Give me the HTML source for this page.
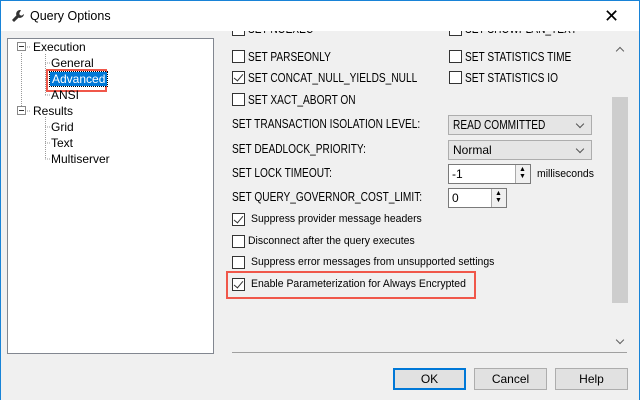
<!DOCTYPE html>
<html><head><style>
*{margin:0;padding:0;box-sizing:border-box}
body{width:640px;height:400px;background:#f0f0f0;font-family:"Liberation Sans",sans-serif;font-size:12px;color:#000;position:relative;overflow:hidden}
.a{position:absolute;white-space:nowrap}
.cb{position:absolute;width:13px;height:13px;border:1px solid #333;background:#fff}
.ck::after{content:"";position:absolute;left:3px;top:0px;width:4px;height:8px;border:solid #333;border-width:0 1.3px 1.3px 0;transform:rotate(40deg)}
.t{position:absolute;white-space:nowrap;line-height:14px}
.u{font-size:13px;transform:scaleX(0.78);transform-origin:0 0}
.l{font-size:11px;transform:scaleX(0.95);transform-origin:0 0}
.combo{position:absolute;background:#e5e5e5;border:1px solid #adadad;height:20px;padding:2px 4px;line-height:14px}
.combo::after{content:"";position:absolute;right:8px;top:5px;width:5px;height:5px;border:solid #555;border-width:0 1px 1px 0;transform:rotate(45deg)}
.spin{position:absolute;background:#fff;border:1px solid #7a7a7a;height:20px;padding:2px 3px;line-height:14px}
.sb{position:absolute;right:0;top:0;width:15px;height:18px;border-left:1px solid #aaa;background:#f0f0f0}
.btn{position:absolute;top:368px;height:22px;background:#e1e1e1;border:1px solid #adadad;text-align:center;line-height:20px}
</style></head><body>
<div class="a" style="left:0;top:0;width:640px;height:31px;background:#fff;border-top:1px solid #1883d7"></div>
<div class="a" style="left:0;top:0;width:1px;height:400px;background:#1883d7"></div>
<div class="a" style="left:639px;top:0;width:1px;height:400px;background:#1883d7"></div>
<svg class="a" style="left:11px;top:9px" width="14" height="14" viewBox="0 0 14 14"><path d="M9 1a4 4 0 0 0-3.6 5.4L1 11l2 2 4.6-4.4A4 4 0 0 0 13 5l-2.2 1.6-2-.5-.5-2L10 1.2z" fill="#333"/></svg>
<div class="t" style="left:30px;top:9px;font-size:12.5px">Query Options</div>
<div class="a" style="left:604px;top:7px;font-size:18px;line-height:18px">✕</div>

<div class="a" style="left:7px;top:38px;width:207px;height:316px;background:#fff;border:1px solid #828790"></div>
<svg class="a" style="left:7px;top:38px" width="120" height="140">
<g stroke="#999" stroke-dasharray="1 1" fill="none">
<path d="M14.5 15v58M18 9h6M18 73h6M38.5 16v41M38 25h6M38 41h6M38 57h6M38.5 79v42M38 89h6M38 105h6M38 121h6"/>
</g>
<rect x="10.5" y="4.5" width="8" height="8" fill="#fff" stroke="#888"/><path d="M12 8.5h5" stroke="#333"/>
<rect x="10.5" y="68.5" width="8" height="8" fill="#fff" stroke="#888"/><path d="M12 72.5h5" stroke="#333"/>
</svg>
<div class="t" style="left:33px;top:40px">Execution</div>
<div class="t" style="left:51px;top:56px">General</div>
<div class="a" style="left:46px;top:69px;width:61px;height:23px;border:2px solid #f0574a"></div>
<div class="t" style="left:50px;top:72px;background:#0078d7;color:#fff;padding:0 2px;outline:1px dotted #000">Advanced</div>
<div class="t" style="left:51px;top:88px">ANSI</div>
<div class="t" style="left:33px;top:104px">Results</div>
<div class="t" style="left:51px;top:120px">Grid</div>
<div class="t" style="left:51px;top:136px">Text</div>
<div class="t" style="left:51px;top:152px">Multiserver</div>

<div class="a" style="left:222px;top:31px;width:390px;height:320px;overflow:hidden">
<div class="cb" style="left:10px;top:-8px"></div><div class="t u" style="left:26px;top:-9px">SET NOEXEC</div>
<div class="cb" style="left:227px;top:-8px"></div><div class="t u" style="left:243px;top:-9px">SET SHOWPLAN_TEXT</div>
</div>
<div class="cb" style="left:232px;top:50px"></div><div class="t u" style="left:248px;top:50px">SET PARSEONLY</div>
<div class="cb" style="left:449px;top:50px"></div><div class="t u" style="left:465px;top:50px">SET STATISTICS TIME</div>
<div class="cb ck" style="left:232px;top:71px"></div><div class="t u" style="left:248px;top:71px">SET CONCAT_NULL_YIELDS_NULL</div>
<div class="cb" style="left:449px;top:71px"></div><div class="t u" style="left:465px;top:71px">SET STATISTICS IO</div>
<div class="cb" style="left:232px;top:93px"></div><div class="t u" style="left:248px;top:93px">SET XACT_ABORT ON</div>
<div class="t u" style="left:232px;top:117px">SET TRANSACTION ISOLATION LEVEL:</div>
<div class="combo" style="left:448px;top:115px;width:144px"><span class="u" style="display:inline-block">READ COMMITTED</span></div>
<div class="t u" style="left:232px;top:142px">SET DEADLOCK_PRIORITY:</div>
<div class="combo" style="left:448px;top:140px;width:144px">Normal</div>
<div class="t u" style="left:232px;top:166px">SET LOCK TIMEOUT:</div>
<div class="spin" style="left:448px;top:164px;width:83px">-1<div class="sb"><span style="position:absolute;left:3px;top:1px;font-size:7px;line-height:7px">▲<br>▼</span></div></div>
<div class="t l" style="left:537px;top:167px">milliseconds</div>
<div class="t u" style="left:232px;top:190px">SET QUERY_GOVERNOR_COST_LIMIT:</div>
<div class="spin" style="left:448px;top:188px;width:59px">0<div class="sb"><span style="position:absolute;left:3px;top:1px;font-size:7px;line-height:7px">▲<br>▼</span></div></div>
<div class="cb ck" style="left:232px;top:213px"></div><div class="t l" style="left:251px;top:212px">Suppress provider message headers</div>
<div class="cb" style="left:232px;top:235px"></div><div class="t l" style="left:248px;top:234px">Disconnect after the query executes</div>
<div class="cb" style="left:232px;top:256px"></div><div class="t l" style="left:251px;top:255px">Suppress error messages from unsupported settings</div>
<div class="a" style="left:226px;top:271px;width:250px;height:28px;border:2px solid #f0574a"></div>
<div class="cb ck" style="left:232px;top:278px"></div><div class="t l" style="left:251px;top:277px">Enable Parameterization for Always Encrypted</div>

<div class="a" style="left:612px;top:31px;width:17px;height:320px;background:#f0f0f0"></div>
<div class="a" style="left:612px;top:97px;width:16px;height:206px;background:#cdcdcd"></div>
<div class="a" style="left:617px;top:48px;width:6px;height:6px;border:solid #606060;border-width:1.5px 0 0 1.5px;transform:rotate(45deg)"></div>
<div class="a" style="left:617px;top:337px;width:6px;height:6px;border:solid #606060;border-width:0 1.5px 1.5px 0;transform:rotate(45deg)"></div>
<div class="a" style="left:232px;top:352px;width:395px;height:1px;background:#a0a0a0"></div>

<div class="btn" style="left:393px;width:73px;border:2px solid #0078d7;line-height:18px">OK</div>
<div class="btn" style="left:474px;width:73px">Cancel</div>
<div class="btn" style="left:555px;width:73px">Help</div>
</body></html>
